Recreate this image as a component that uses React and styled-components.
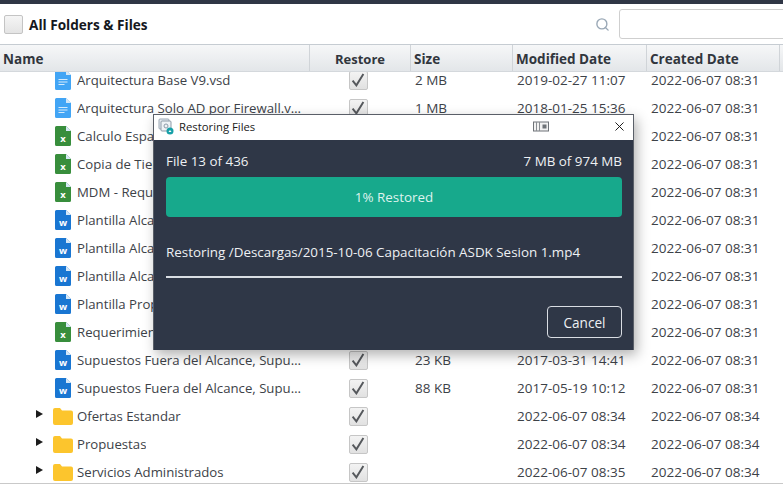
import React from "react";
import styled, { createGlobalStyle } from "styled-components";
import { Search, X } from "lucide-react";

const Global = createGlobalStyle`
  html, body { margin: 0; padding: 0; background: #fff; overflow: hidden; }
  body { font-family: "Open Sans", "Noto Sans", "Liberation Sans", sans-serif; }
`;

const Page = styled.div`
  position: relative;
  width: 783px;
  height: 484px;
  overflow: hidden;
  display: flex;
  flex-direction: column;
  background: #fff;
  border-top: 4px solid #2f3645;
  box-sizing: border-box;
`;

const Toolbar = styled.div`
  flex: 0 0 40px;
  display: flex;
  align-items: center;
  padding-left: 4px;
  box-sizing: border-box;
`;

const BigCheck = styled.span`
  width: 19px;
  height: 19px;
  box-sizing: border-box;
  border: 1px solid #c4c4c4;
  border-radius: 2px;
  background: linear-gradient(#f5f5f5, #e4e4e4);
`;

const Title = styled.span`
  margin-left: 6px;
  font-size: 13.6px;
  font-weight: 700;
  color: #15181d;
  flex: 1;
`;

const SearchIcon = styled(Search)`
  color: #9aa8b6;
  margin-right: 9px;
`;

const SearchInput = styled.div`
  width: 170px;
  height: 30px;
  margin-right: -6px;
  box-sizing: border-box;
  border: 1px solid #cfcfcf;
  border-radius: 3px;
`;

const columns = "310px 101px 102px 134px 133px 3px";

const Header = styled.div`
  flex: 0 0 28px;
  display: grid;
  grid-template-columns: ${columns};
  box-sizing: border-box;
  border-top: 1px solid #c6ccd2;
  border-bottom: 1px solid #d4d8dc;
  background: linear-gradient(#f6f7f8, #e3e6e9);
`;

const HeadCell = styled.div`
  display: flex;
  align-items: center;
  justify-content: ${(p) => (p.$center ? "center" : "flex-start")};
  padding-left: ${(p) => (p.$center ? "0" : "3px")};
  padding-top: 2px;
  font-size: ${(p) => (p.$center ? "13px" : "13.5px")};
  font-weight: 700;
  color: #31363d;
  border-right: 1px solid #d0d4d8;
  white-space: nowrap;
`;

const Body = styled.div`
  flex: 1;
  overflow: hidden;
  border-bottom: 1px solid #c9c9c9;
`;

const List = styled.div`
  margin-top: -6px;
`;

const Row = styled.div`
  height: 28px;
  display: grid;
  grid-template-columns: ${columns};
  align-items: center;
  font-size: 13.5px;
  color: #3d4248;
  white-space: nowrap;
`;

const NameCell = styled.div`
  display: flex;
  align-items: center;
  min-width: 0;
  padding-left: ${(p) => (p.$folder ? "36px" : "55px")};
`;

const Arrow = styled.span`
  width: 0;
  height: 0;
  margin-right: 10px;
  margin-top: -4px;
  border-left: 7px solid #1c1c1c;
  border-top: 4.5px solid transparent;
  border-bottom: 4.5px solid transparent;
`;

const Name = styled.span`
  margin-left: ${(p) => (p.$folder ? "4px" : "6px")};
  max-width: 226px;
  font-size: 13.2px;
  overflow: hidden;
  text-overflow: ellipsis;
`;

const CheckCell = styled.div`
  display: flex;
  justify-content: center;
  padding-right: 5px;
`;

const RowCheck = styled.span`
  width: 19px;
  height: 19px;
  box-sizing: border-box;
  display: flex;
  align-items: center;
  justify-content: center;
  border: 1px solid #c6c6c6;
  border-radius: 2px;
  background: linear-gradient(#f3f3f3, #e1e1e1);
`;

const SizeCell = styled.div`
  padding-left: 4px;
`;

const DateCell = styled.div`
  padding-left: 4px;
`;

const Dialog = styled.div`
  position: absolute;
  left: 153px;
  top: 110px;
  width: 481px;
  height: 236px;
  box-sizing: border-box;
  border: 1px solid #5a5f68;
  border-bottom: none;
  display: flex;
  flex-direction: column;
  box-shadow: 3px 5px 12px rgba(0, 0, 0, 0.3);
`;

const TitleBar = styled.div`
  flex: 0 0 25px;
  box-sizing: border-box;
  display: flex;
  align-items: center;
  padding: 0 6px 2px 4px;
  background: #fff;
  font-size: 11.3px;
  color: #1a1a1a;
`;

const TitleText = styled.span`
  margin-left: 5px;
  flex: 1;
`;

const CloseIcon = styled(X)`
  margin-left: 63px;
  color: #111;
`;

const DialogBody = styled.div`
  flex: 1;
  display: flex;
  flex-direction: column;
  padding: 12px 11px 12px 12px;
  background: #2f3747;
  color: #eef0f3;
  font-size: 13.4px;
`;

const Stats = styled.div`
  display: flex;
  justify-content: space-between;
  line-height: 18px;
`;

const ProgressBar = styled.div`
  margin-top: 7px;
  height: 40px;
  display: flex;
  align-items: center;
  justify-content: center;
  border-radius: 4px;
  background: #17a98c;
  font-size: 13.4px;
  color: #dff3ee;
`;

const Path = styled.div`
  margin-top: 26px;
  line-height: 18px;
  white-space: nowrap;
`;

const Rule = styled.div`
  margin-top: 15px;
  height: 2px;
  background: #d9dde3;
`;

const Actions = styled.div`
  margin-top: auto;
  display: flex;
  justify-content: flex-end;
`;

const Cancel = styled.button`
  width: 75px;
  height: 32px;
  border: 1px solid #d9dde3;
  border-radius: 4px;
  background: transparent;
  color: #eef0f3;
  font: inherit;
  font-size: 13.6px;
`;

function FileIcon({ kind }) {
  const fill = kind === "vsd" ? "#42a5f5" : kind === "x" ? "#388e3c" : "#1976d2";
  return (
    <svg width="16" height="20" viewBox="0 0 16 20" aria-hidden="true">
      <path d="M1.5 0H11l5 5v13.5a1.5 1.5 0 0 1-1.5 1.5h-13A1.5 1.5 0 0 1 0 18.5v-17A1.5 1.5 0 0 1 1.5 0z" fill={fill} />
      <path d="M11 0l5 5h-5z" fill="#d6e8f7" />
      {kind === "vsd" ? (
        <path d="M3.5 9.5h9M3.5 12h9M3.5 14.5h6" stroke="#d5ebfc" strokeWidth="1.1" />
      ) : (
        <text x="8" y="16" textAnchor="middle" fontSize="9.5" fontWeight="700" fill="#fff" fontFamily="Open Sans, sans-serif">
          {kind}
        </text>
      )}
    </svg>
  );
}

function FolderIcon() {
  return (
    <svg width="20" height="17" viewBox="0 0 20 17" aria-hidden="true">
      <path d="M0 2a2 2 0 0 1 2-2h5l2 2.4h9a2 2 0 0 1 2 2V15a2 2 0 0 1-2 2H2a2 2 0 0 1-2-2z" fill="#fcc52d" />
    </svg>
  );
}

function Tick() {
  return (
    <svg width="14" height="14" viewBox="0 0 13 13" aria-hidden="true">
      <path d="M1.5 7l3.5 4.5L11.5 1" fill="none" stroke="#55585c" strokeWidth="1.8" />
    </svg>
  );
}

function TitleLogo() {
  return (
    <svg width="16" height="17" viewBox="0 0 16 17" aria-hidden="true">
      <rect x="1" y="1" width="10" height="10" rx="1" fill="#e6ebf0" stroke="#9aa7b3" />
      <rect x="3" y="3" width="10" height="10" rx="1" fill="#eef2f5" stroke="#8d9ba8" />
      <circle cx="8" cy="8" r="2" fill="none" stroke="#8d9ba8" />
      <circle cx="12" cy="13" r="3.5" fill="#17a0a8" />
      <path d="M10.5 14l1.5-2 1.5 2z" fill="#fff" />
    </svg>
  );
}

function MiniPlayer() {
  return (
    <svg width="16" height="11" viewBox="0 0 16 11" aria-hidden="true">
      <rect x="0.5" y="1" width="15" height="9" fill="#f2f2f2" stroke="#6f7378" />
      <path d="M3.5 1v9M6.5 1v9" stroke="#8a8e93" />
      <rect x="9.5" y="3.5" width="4" height="4" fill="#6f7378" />
    </svg>
  );
}

const rows = [
  { k: "vsd", n: "Arquitectura Base V9.vsd", s: "2 MB", m: "2019-02-27 11:07", c: "2022-06-07 08:31" },
  { k: "vsd", n: "Arquitectura Solo AD por Firewall.vsd", s: "1 MB", m: "2018-01-25 15:36", c: "2022-06-07 08:31" },
  { k: "x", n: "Calculo Espacio.xlsx", s: "", m: "", c: "2022-06-07 08:31" },
  { k: "x", n: "Copia de Tiempos.xlsx", s: "", m: "", c: "2022-06-07 08:31" },
  { k: "x", n: "MDM - Requerimientos.xlsx", s: "", m: "", c: "2022-06-07 08:31" },
  { k: "w", n: "Plantilla Alcance 1.docx", s: "", m: "", c: "2022-06-07 08:31" },
  { k: "w", n: "Plantilla Alcance 2.docx", s: "", m: "", c: "2022-06-07 08:31" },
  { k: "w", n: "Plantilla Alcance 3.docx", s: "", m: "", c: "2022-06-07 08:31" },
  { k: "w", n: "Plantilla Propuesta.docx", s: "", m: "", c: "2022-06-07 08:31" },
  { k: "x", n: "Requerimientos.xlsx", s: "", m: "", c: "2022-06-07 08:31" },
  { k: "w", n: "Supuestos Fuera del Alcance, Supuestos A.docx", s: "23 KB", m: "2017-03-31 14:41", c: "2022-06-07 08:31" },
  { k: "w", n: "Supuestos Fuera del Alcance, Supuestos B.docx", s: "88 KB", m: "2017-05-19 10:12", c: "2022-06-07 08:31" },
  { f: true, n: "Ofertas Estandar", s: "", m: "2022-06-07 08:34", c: "2022-06-07 08:34" },
  { f: true, n: "Propuestas", s: "", m: "2022-06-07 08:34", c: "2022-06-07 08:34" },
  { f: true, n: "Servicios Administrados", s: "", m: "2022-06-07 08:35", c: "2022-06-07 08:34" },
];

export default function App() {
  return (
    <Page>
      <Global />
      <Toolbar>
        <BigCheck />
        <Title>All Folders &amp; Files</Title>
        <SearchIcon size={15} strokeWidth={2.2} />
        <SearchInput />
      </Toolbar>
      <Header>
        <HeadCell>Name</HeadCell>
        <HeadCell $center>Restore</HeadCell>
        <HeadCell>Size</HeadCell>
        <HeadCell>Modified Date</HeadCell>
        <HeadCell>Created Date</HeadCell>
        <HeadCell />
      </Header>
      <Body>
        <List>
          {rows.map((r) => (
            <Row key={r.n}>
              <NameCell $folder={r.f}>
                {r.f && <Arrow />}
                {r.f ? <FolderIcon /> : <FileIcon kind={r.k} />}
                <Name $folder={r.f}>{r.n}</Name>
              </NameCell>
              <CheckCell>
                <RowCheck>
                  <Tick />
                </RowCheck>
              </CheckCell>
              <SizeCell>{r.s}</SizeCell>
              <DateCell>{r.m}</DateCell>
              <DateCell>{r.c}</DateCell>
            </Row>
          ))}
        </List>
      </Body>
      <Dialog>
        <TitleBar>
          <TitleLogo />
          <TitleText>Restoring Files</TitleText>
          <MiniPlayer />
          <CloseIcon size={15} strokeWidth={1.5} />
        </TitleBar>
        <DialogBody>
          <Stats>
            <span>File 13 of 436</span>
            <span>7 MB of 974 MB</span>
          </Stats>
          <ProgressBar>1% Restored</ProgressBar>
          <Path>Restoring /Descargas/2015-10-06 Capacitación ASDK Sesion 1.mp4</Path>
          <Rule />
          <Actions>
            <Cancel>Cancel</Cancel>
          </Actions>
        </DialogBody>
      </Dialog>
    </Page>
  );
}
